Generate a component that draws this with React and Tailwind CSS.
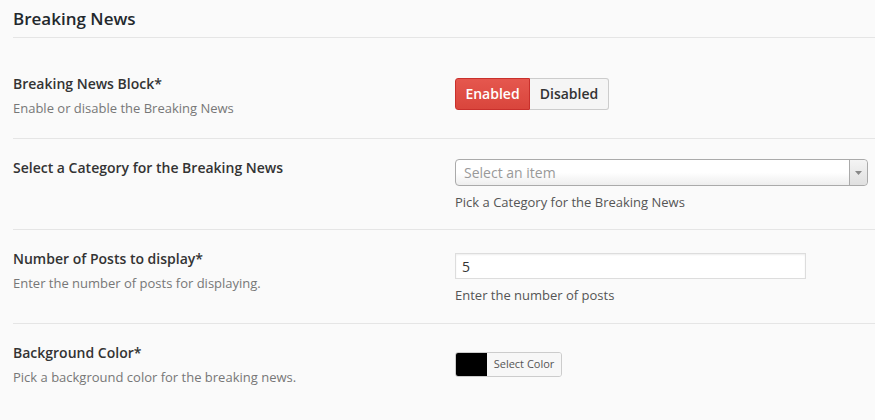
import React, { useState } from 'react';

const font = { fontFamily: '"Open Sans", "Noto Sans", Arial, sans-serif' };

function Row({ label, desc, children, pad }) {
  return (
    <div className={`flex border-t border-[#e5e5e5] ${pad}`}>
      <div className="w-[442px] shrink-0">
        <div className="text-[14px] leading-5 font-semibold text-[#333]">{label}</div>
        {desc && <div className="mt-[5px] text-[13px] leading-[18px] text-[#777]">{desc}</div>}
      </div>
      <div className="flex-1">{children}</div>
    </div>
  );
}

export default function App() {
  const [enabled, setEnabled] = useState(true);

  return (
    <div className="min-h-[420px] w-[875px] bg-[#fafafa] pl-[13px]" style={font}>
      {/* Header */}
      <div className="pt-[9px] pb-[8px] text-[17px] leading-[20px] font-semibold text-[#23282d]">
        Breaking News
      </div>

      <Row pad="pt-[36px] pb-[21px]" label="Breaking News Block*" desc="Enable or disable the Breaking News">
        <div className="mt-[4px] inline-flex text-[14px] leading-5 font-semibold">
          <button
            onClick={() => setEnabled(true)}
            className={`h-[32px] w-[75px] rounded-l-[3px] border ${enabled ? 'border-[#c9302c] bg-gradient-to-b from-[#e5574e] to-[#d9453c] text-white' : 'border-[#ccc] bg-[#f5f5f5] text-[#333]'}`}
          >
            Enabled
          </button>
          <button
            onClick={() => setEnabled(false)}
            className={`h-[32px] w-[79px] rounded-r-[3px] border border-l-0 ${!enabled ? 'border-[#c9302c] bg-gradient-to-b from-[#e5574e] to-[#d9453c] text-white' : 'border-[#ccc] bg-[#f5f5f5] text-[#333]'}`}
          >
            Disabled
          </button>
        </div>
      </Row>

      <Row pad="pt-[19px] pb-[18px]" label="Select a Category for the Breaking News">
        <div className="mt-[1px] flex h-[27px] w-[413px] items-stretch rounded-[4px] border border-[#aaa] bg-gradient-to-b from-white from-50% to-[#eee]">
          <div className="flex flex-1 items-center pl-[8px] text-[14px] text-[#999]">Select an item</div>
          <div className="flex w-[18px] items-center justify-center rounded-r-[4px] border-l border-[#aaa] bg-gradient-to-b from-[#f4f4f4] to-[#e0e0e0]">
            <svg width="7" height="4" viewBox="0 0 7 4">
              <path d="M0 0h7L3.5 4z" fill="#888" />
            </svg>
          </div>
        </div>
        <div className="mt-[7px] text-[13px] leading-[18px] text-[#555]">Pick a Category for the Breaking News</div>
      </Row>

      <Row pad="pt-[19px] pb-[19px]" label="Number of Posts to display*" desc="Enter the number of posts for displaying.">
        <div className="mt-[4px] flex h-[26px] w-[351px] items-center border border-[#ddd] bg-white pl-[6px] text-[14px] text-[#333] shadow-[inset_0_1px_2px_rgba(0,0,0,0.07)]">
          5
        </div>
        <div className="mt-[7px] text-[13px] leading-[18px] text-[#555]">Enter the number of posts</div>
      </Row>

      <Row pad="pt-[19px] pb-[19px]" label="Background Color*" desc="Pick a background color for the breaking news.">
        <div className="mt-[9px] inline-flex h-[25px] overflow-hidden rounded-[3px] border border-[#ccc]">
          <div className="w-[31px] bg-black" />
          <div className="flex w-[74px] items-center justify-center bg-[#f7f7f7] text-[11px] text-[#555]">Select Color</div>
        </div>
      </Row>
    </div>
  );
}
